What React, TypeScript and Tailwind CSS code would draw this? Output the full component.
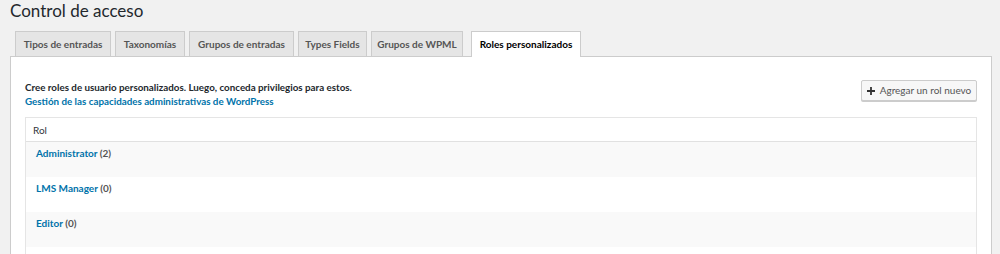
import React from 'react';

const tabs = [
  { label: 'Tipos de entradas', w: 'w-[96px]' },
  { label: 'Taxonomías', w: 'w-[70px]' },
  { label: 'Grupos de entradas', w: 'w-[105px]' },
  { label: 'Types Fields', w: 'w-[69px]' },
  { label: 'Grupos de WPML', w: 'w-[92px]' },
];

const roles = [
  { name: 'Administrator', count: 2 },
  { name: 'LMS Manager', count: 0 },
  { name: 'Editor', count: 0 },
  { name: '', count: -1 },
];

export default function App() {
  return (
    <div className="h-[254px] overflow-hidden bg-[#f1f1f1] font-['Lato',sans-serif] text-[#444]">
      <h1 className="h-[23px] pl-[10px] text-[17px] font-normal leading-[21px] text-[#23282d]">Control de acceso</h1>

      {/* tab strip */}
      <div className="relative z-10 ml-[15px] mt-[8px] flex h-[25px] items-start">
        {tabs.map((t, i) => (
          <div
            key={t.label}
            className={`${t.w} ${i > 0 ? 'ml-[4px]' : ''} h-[25px] border border-b-0 border-[#ccc] bg-[#e5e5e5] pt-[5px] text-center text-[10px] font-bold leading-[14px] text-[#555]`}
          >
            {t.label}
          </div>
        ))}
        <div className="ml-[8px] h-[26px] w-[110px] border border-b-0 border-[#ccc] bg-white pt-[5px] text-center text-[10px] font-bold leading-[14px] text-black">
          Roles personalizados
        </div>
      </div>

      {/* panel */}
      <div className="ml-[10px] mr-[8px] h-[200px] border border-[#ccc] bg-white pl-[14px] pr-[14px] pt-[23px]">
        <div className="flex items-start justify-between">
          <div className="text-[9.8px] font-bold leading-[14px]">
            <p className="text-[#23282d]">Cree roles de usuario personalizados. Luego, conceda privilegios para estos.</p>
            <a className="text-[#0073aa]">Gestión de las capacidades administrativas de WordPress</a>
          </div>
          <button className="flex h-[21px] w-[116px] items-center justify-center gap-[5px] rounded-[2px] border border-[#ccc] bg-[#f7f7f7] text-[10px] text-[#555] shadow-[0_1px_0_#ccc]">
            <svg width="8" height="8" viewBox="0 0 8 8">
              <path d="M4 0v8M0 4h8" stroke="#333" strokeWidth="1.8" />
            </svg>
            Agregar un rol nuevo
          </button>
        </div>

        <div className="mt-[9px] border border-[#e5e5e5]">
          <div className="h-[24px] border-b border-[#e1e1e1] pl-[7px] pt-[5px] text-[10px] leading-[14px] text-[#32373c]">Rol</div>
          {roles.map((r, i) => (
            <div
              key={i}
              className={`h-[35px] pl-[10px] pt-[4px] text-[10px] font-bold leading-[14px] ${i % 2 === 0 ? 'bg-[#f9f9f9]' : 'bg-white'}`}
            >
              {r.name && (
                <>
                  <a className="text-[#0073aa]">{r.name}</a>{' '}
                  <span className="text-[#555]">({r.count})</span>
                </>
              )}
            </div>
          ))}
        </div>
      </div>
    </div>
  );
}
